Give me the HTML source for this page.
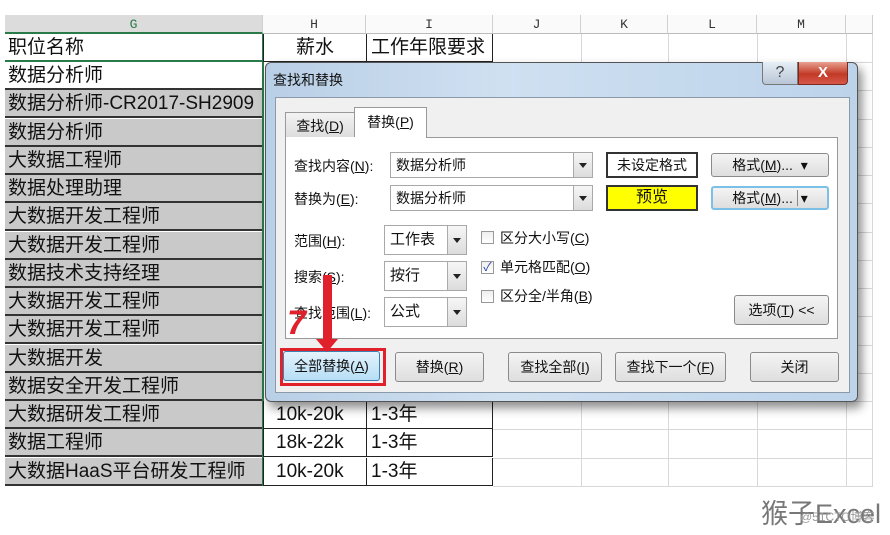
<!DOCTYPE html>
<html><head><meta charset="utf-8"><style>
*{margin:0;padding:0;box-sizing:border-box}
body{width:890px;height:535px;background:#fff;position:relative;overflow:hidden;font-family:"Liberation Sans","Noto Sans CJK SC",sans-serif;color:#111}
.a{position:absolute}
.ch{position:absolute;top:15px;height:19px;font:13px "Liberation Mono","DejaVu Sans Mono",monospace;text-align:center;line-height:19px;color:#333;border-right:1px solid #d0d0d0;border-bottom:1px solid #bbb;background:#fafafa}
.g{position:absolute;left:5px;width:258px;height:28.3px;background:#c9c9c9;border-bottom:2px solid #333;font-size:19px;line-height:27px;padding-left:3px;white-space:nowrap;overflow:hidden}
.c{position:absolute;height:28.3px;border:1px solid #222;border-top:none;font-size:19px;line-height:27px;padding-left:4px;white-space:nowrap;overflow:hidden;background:#fff}
.vl{position:absolute;top:34px;height:452px;width:1px;background:#d8d8d8}
.hl{position:absolute;left:493px;width:380px;height:1px;background:#d8d8d8}
.lbl{position:absolute;font-size:14px;left:294px}
.inp{position:absolute;background:#fff;border:1px solid #a8a8a8;font-size:14px;line-height:24px;padding-left:5px}
.dd{position:absolute;right:0;top:0;bottom:0;width:19px;border-left:1px solid #aaa;background:linear-gradient(#f6f6f6,#dcdcdc)}
.dd:after{content:"";position:absolute;left:5px;top:50%;margin-top:-2px;border:4px solid transparent;border-top:5px solid #222}
.btn{position:absolute;border:1px solid #8a8a8a;border-radius:3px;background:linear-gradient(#f4f4f4,#dedede);font-size:14px;text-align:center;line-height:28px}
.cb{position:absolute;left:481px;width:13px;height:13px;border:1px solid #999;background:linear-gradient(#eee,#fff)}
.ct{position:absolute;left:500px;font-size:14px}
</style></head><body>
<!-- column headers -->
<div class="ch" style="left:5px;width:258px;background:#dcdcdc;color:#2a7a4a;border-bottom:2px solid #2a7a4a">G</div>
<div class="ch" style="left:263px;width:103px">H</div>
<div class="ch" style="left:366px;width:127px">I</div>
<div class="ch" style="left:493px;width:88px">J</div>
<div class="ch" style="left:581px;width:87px">K</div>
<div class="ch" style="left:668px;width:89px">L</div>
<div class="ch" style="left:757px;width:89px">M</div>
<div class="ch" style="left:846px;width:27px"></div>
<!-- empty grid lines -->
<div class="vl" style="left:581px"></div><div class="vl" style="left:668px"></div><div class="vl" style="left:757px"></div><div class="vl" style="left:846px"></div><div class="vl" style="left:872px"></div>
<div class="hl" style="top:62px"></div><div class="hl" style="top:90px"></div><div class="hl" style="top:119px"></div><div class="hl" style="top:147px"></div><div class="hl" style="top:175px"></div><div class="hl" style="top:203px"></div><div class="hl" style="top:232px"></div><div class="hl" style="top:260px"></div><div class="hl" style="top:288px"></div><div class="hl" style="top:316px"></div><div class="hl" style="top:345px"></div><div class="hl" style="top:373px"></div><div class="hl" style="top:401px"></div><div class="hl" style="top:429px"></div><div class="hl" style="top:458px"></div><div class="hl" style="top:486px"></div>
<!-- G column -->
<div class="g" style="top:34px;background:#fff;border-bottom:2px solid #2a7a4a">职位名称</div>
<div class="g" style="top:62px;background:#fff">数据分析师</div>
<div class="g" style="top:90px">数据分析师-CR2017-SH2909</div>
<div class="g" style="top:119px">数据分析师</div>
<div class="g" style="top:147px">大数据工程师</div>
<div class="g" style="top:175px">数据处理助理</div>
<div class="g" style="top:203px">大数据开发工程师</div>
<div class="g" style="top:232px">大数据开发工程师</div>
<div class="g" style="top:260px">数据技术支持经理</div>
<div class="g" style="top:288px">大数据开发工程师</div>
<div class="g" style="top:316px">大数据开发工程师</div>
<div class="g" style="top:345px">大数据开发</div>
<div class="g" style="top:373px">数据安全开发工程师</div>
<div class="g" style="top:401px">大数据研发工程师</div>
<div class="g" style="top:429px">数据工程师</div>
<div class="g" style="top:458px">大数据HaaS平台研发工程师</div>
<div class="a" style="left:262px;top:34px;width:2px;height:452px;background:#2a7a4a"></div>
<!-- H/I -->
<div class="c" style="left:263px;top:34px;width:104px;text-align:center;padding:0">薪水</div>
<div class="c" style="left:366px;top:34px;width:127px">工作年限要求</div>
<div class="c" style="left:263px;top:401px;width:104px;padding-left:12px">10k-20k</div>
<div class="c" style="left:366px;top:401px;width:127px">1-3年</div>
<div class="c" style="left:263px;top:429px;width:104px;padding-left:12px">18k-22k</div>
<div class="c" style="left:366px;top:429px;width:127px">1-3年</div>
<div class="c" style="left:263px;top:458px;width:104px;padding-left:12px">10k-20k</div>
<div class="c" style="left:366px;top:458px;width:127px">1-3年</div>
<!-- dialog -->
<div class="a" style="left:265px;top:62px;width:593px;height:340px;border:1px solid #555;border-radius:6px;background:linear-gradient(90deg,#b9cfe6,#cfe0f1 40%,#bcd3ea);box-shadow:4px 6px 10px rgba(0,0,0,.45)"></div>
<div class="a" style="left:273px;top:70px;font-size:14px;color:#111">查找和替换</div>
<div class="a" style="left:762px;top:62px;width:36px;height:23px;border:1px solid #777;border-top:none;border-radius:0 0 0 4px;background:linear-gradient(#e6eef6,#b8c6d6);text-align:center;font-size:16px;line-height:22px;color:#444">?</div>
<div class="a" style="left:798px;top:62px;width:50px;height:23px;border:1px solid #7a2a20;border-top:none;border-radius:0 0 4px 0;background:linear-gradient(#e8a090,#c23a26 55%,#d6574a);text-align:center;font-size:15px;font-weight:bold;line-height:22px;color:#fff">X</div>
<div class="a" style="left:275px;top:97px;width:575px;height:296px;background:#f0f0f0;border:1px solid #8a9aaa"></div>
<!-- tabs -->
<div class="a" style="left:285px;top:112px;width:70px;height:26px;border:1px solid #999;border-bottom:none;background:linear-gradient(#f3f3f3,#dcdcdc);font-size:14px;line-height:26px;text-align:center">查找(<u>D</u>)</div>
<div class="a" style="left:354px;top:107px;width:73px;height:31px;border:1px solid #999;border-bottom:none;background:#fff;font-size:14px;line-height:28px;text-align:center">替换(<u>P</u>)</div>
<div class="a" style="left:285px;top:137px;width:553px;height:202px;border:1px solid #999;border-top:none;background:#fff"></div>
<div class="a" style="left:426px;top:137px;width:412px;height:1px;background:#999"></div>
<div class="lbl" style="top:156px">查找内容(<u>N</u>):</div>
<div class="inp" style="left:390px;top:152px;width:203px;height:26px">数据分析师<div class="dd"></div></div>
<div class="lbl" style="top:189px">替换为(<u>E</u>):</div>
<div class="inp" style="left:390px;top:185px;width:203px;height:26px">数据分析师<div class="dd"></div></div>
<div class="a" style="left:606px;top:152px;width:92px;height:26px;border:2px solid #333;background:#fff;font-size:14px;line-height:22px;text-align:center">未设定格式</div>
<div class="a" style="left:606px;top:185px;width:92px;height:26px;border:2px solid #333;background:#ffff00;font-size:16px;line-height:22px;text-align:center">预览</div>
<div class="btn" style="left:711px;top:153px;width:118px;height:24px;line-height:22px">格式(<u>M</u>)... &nbsp;▾</div>
<div class="btn" style="left:711px;top:186px;width:118px;height:24px;line-height:20px;border:2px solid #7cc0e8">格式(<u>M</u>)... <span style="border-left:1px solid #888;padding-left:3px">▾</span></div>
<div class="lbl" style="top:231px">范围(<u>H</u>):</div>
<div class="inp" style="left:384px;top:225px;width:83px;height:30px;line-height:28px;font-size:15px">工作表<div class="dd"></div></div>
<div class="lbl" style="top:267px">搜索(<u>S</u>):</div>
<div class="inp" style="left:384px;top:261px;width:83px;height:30px;line-height:28px;font-size:15px">按行<div class="dd"></div></div>
<div class="lbl" style="top:303px">查找范围(<u>L</u>):</div>
<div class="inp" style="left:384px;top:297px;width:83px;height:30px;line-height:28px;font-size:15px">公式<div class="dd"></div></div>
<div class="cb" style="top:231px"></div><div class="ct" style="top:228px">区分大小写(<u>C</u>)</div>
<div class="cb" style="top:261px;font-size:12px;line-height:11px;color:#2244aa;text-align:center">✓</div><div class="ct" style="top:257px">单元格匹配(<u>O</u>)</div>
<div class="cb" style="top:290px"></div><div class="ct" style="top:286px">区分全/半角(<u>B</u>)</div>
<div class="btn" style="left:734px;top:295px;width:95px;height:30px">选项(<u>T</u>) &lt;&lt;</div>
<!-- bottom buttons -->
<div class="btn" style="left:283px;top:351px;width:97px;height:30px;background:linear-gradient(#e4f3fc,#b6def6);border-color:#3c7fb1">全部替换(<u>A</u>)</div>
<div class="a" style="left:280px;top:348px;width:106px;height:38px;border:3px solid #e0202a"></div>
<div class="btn" style="left:395px;top:352px;width:89px;height:30px">替换(<u>R</u>)</div>
<div class="btn" style="left:508px;top:352px;width:94px;height:30px">查找全部(<u>I</u>)</div>
<div class="btn" style="left:615px;top:352px;width:111px;height:30px">查找下一个(<u>F</u>)</div>
<div class="btn" style="left:750px;top:352px;width:89px;height:30px">关闭</div>
<!-- arrow -->
<div class="a" style="left:323px;top:275px;width:9px;height:66px;background:#e0202a"></div>
<div class="a" style="left:316px;top:339px;width:0;height:0;border-left:11px solid transparent;border-right:11px solid transparent;border-top:13px solid #e0202a"></div>
<div class="a" style="left:287px;top:303px;font-size:34px;font-weight:bold;font-style:italic;color:#e0202a;line-height:40px">7</div>
<!-- watermark -->
<div class="a" style="left:761px;top:498px;font-size:27px;color:#777;line-height:32px">猴子Excel</div>
<div class="a" style="left:800px;top:510px;font-size:12px;color:#999;line-height:14px">@51CTO博客</div>
</body></html>
